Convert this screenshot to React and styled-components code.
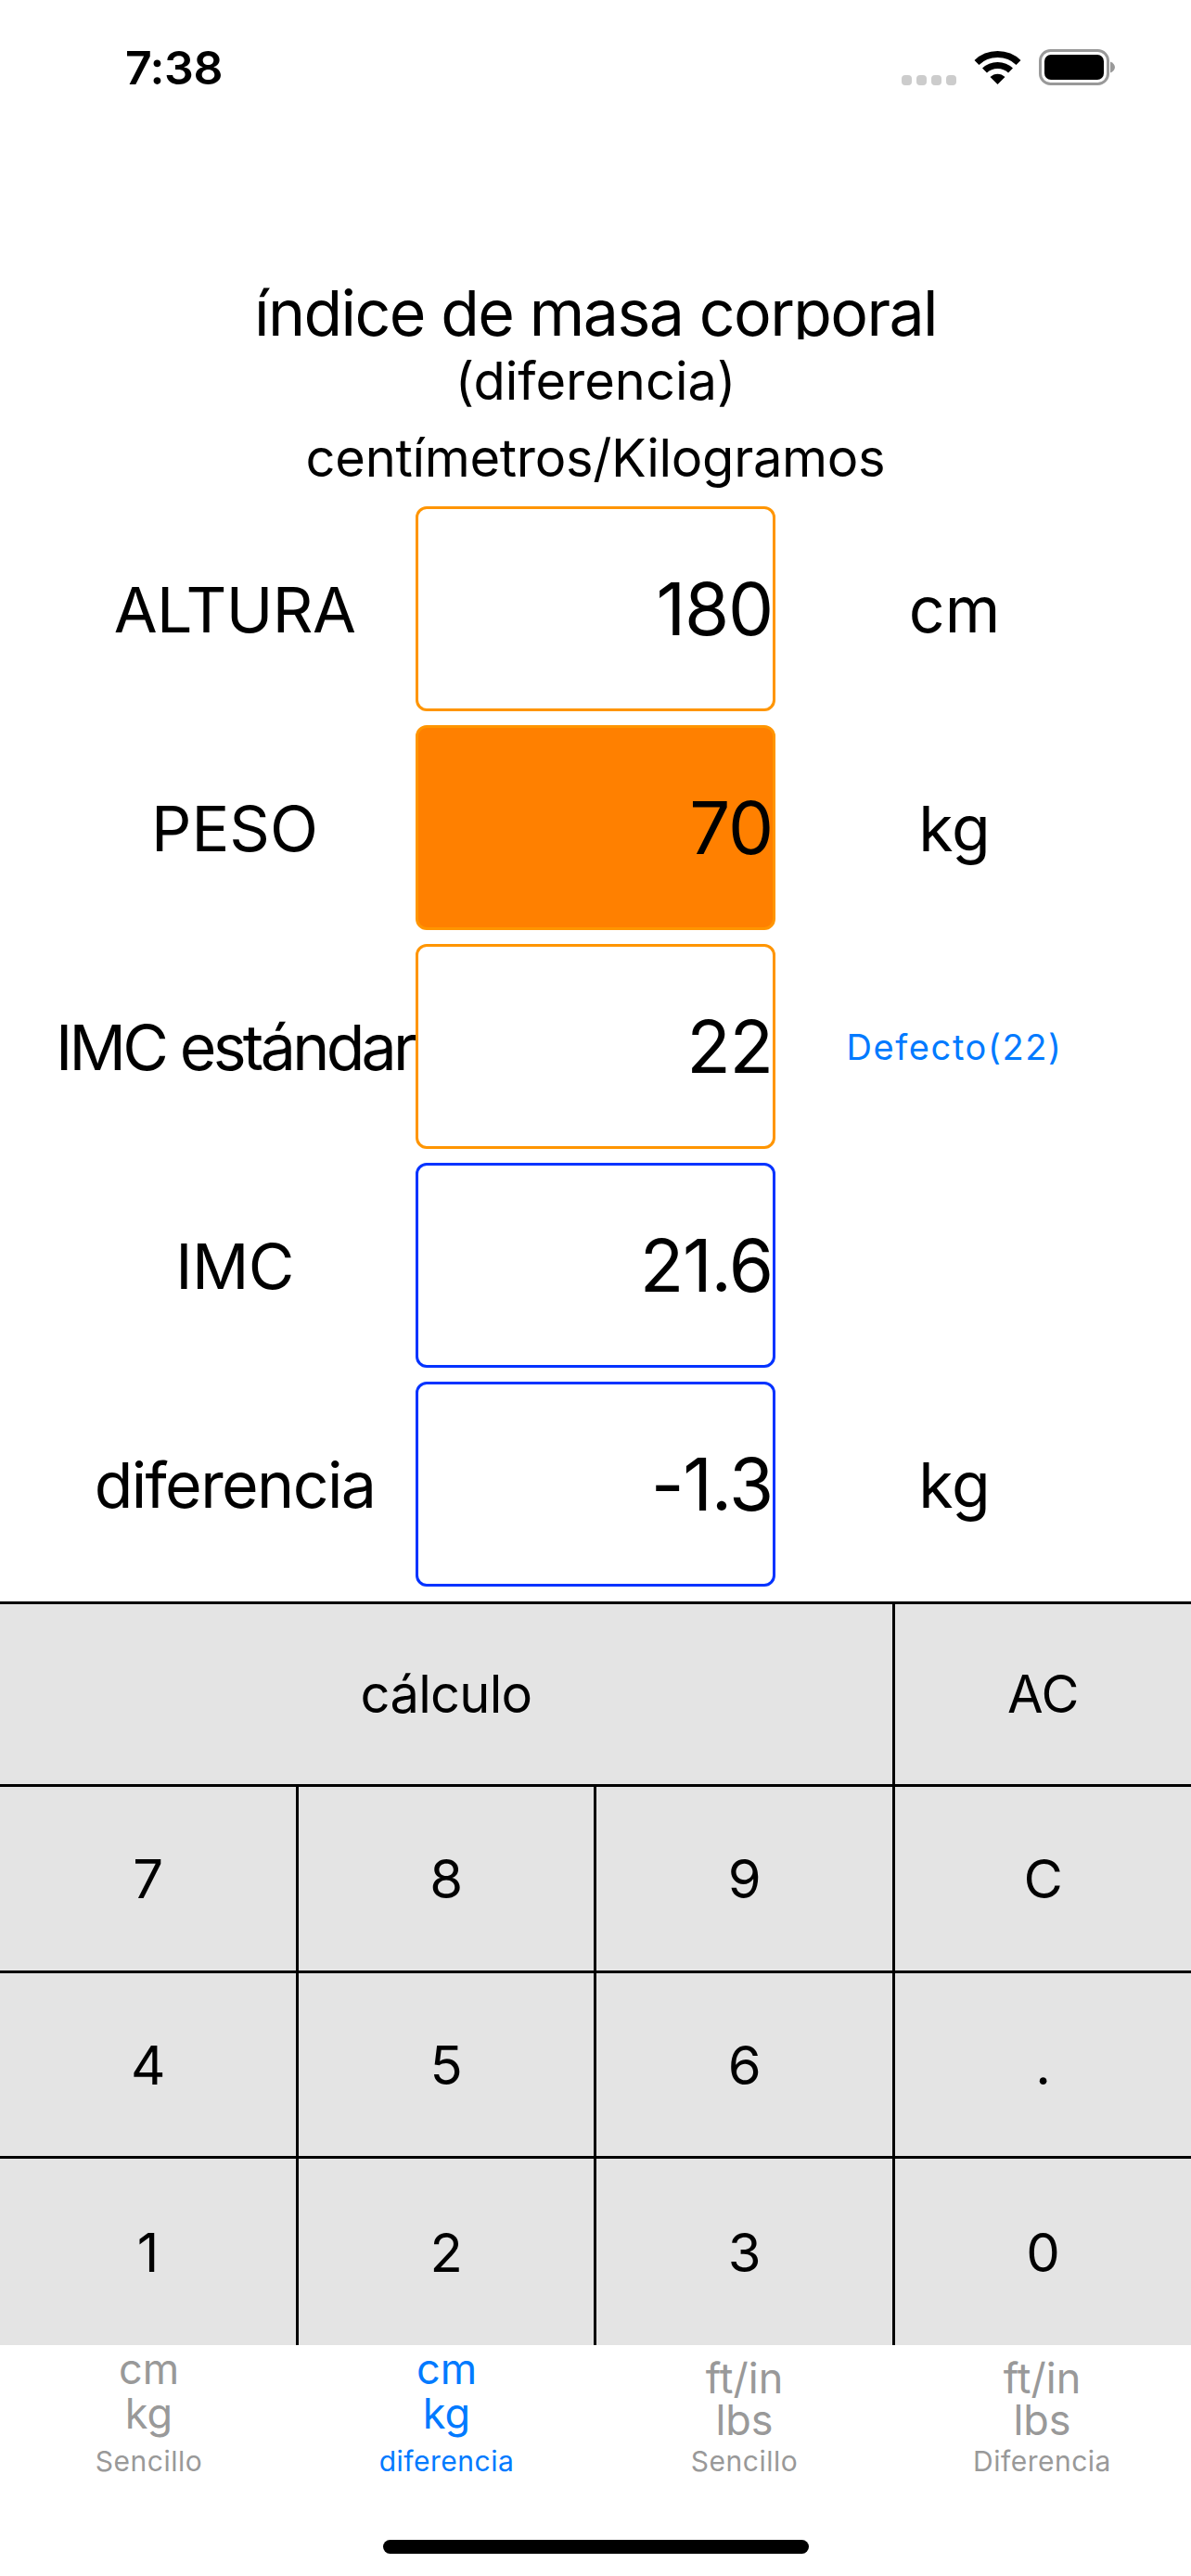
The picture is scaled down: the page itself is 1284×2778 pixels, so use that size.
import React from 'react';
import styled, { createGlobalStyle } from 'styled-components';

const GlobalStyle = createGlobalStyle`
  html, body {
    margin: 0;
    padding: 0;
    background: #fff;
  }
  * {
    box-sizing: border-box;
  }
`;

const Screen = styled.div`
  width: 1284px;
  height: 2778px;
  display: flex;
  flex-direction: column;
  background: #fff;
  color: #000;
  font-family: Inter, 'Liberation Sans', sans-serif;
  overflow: hidden;
`;

const StatusBar = styled.div`
  height: 306px;
  padding: 49px 82px 0 135px;
  display: flex;
  justify-content: space-between;
  align-items: flex-start;
`;

const Clock = styled.div`
  font-size: 50px;
  line-height: 48px;
  font-weight: 600;
  letter-spacing: -0.5px;
`;

const StatusIcons = styled.div`
  display: flex;
  align-items: flex-start;
  gap: 19px;
  padding-top: 4px;
`;

const SignalDots = styled.div`
  display: flex;
  gap: 5px;
  padding-top: 28px;
`;

const SignalDot = styled.span`
  width: 11px;
  height: 11px;
  border-radius: 4px;
  background: #ccc;
`;

const Header = styled.div`
  height: 240px;
  text-align: center;
`;

// the first line is cut just under its baseline, as in the app
const TitleLine = styled.div`
  height: ${(p) => p.$box}px;
  overflow: hidden;
  font-size: ${(p) => p.$size}px;
  line-height: ${(p) => p.$height}px;
  letter-spacing: ${(p) => p.$spacing || 0}px;
`;

const Form = styled.div`
  display: flex;
  flex-direction: column;
  gap: 15px;
  padding-left: 58px;
  height: 1181px;
`;

const FormRow = styled.div`
  display: grid;
  grid-template-columns: 390px 388px 386px;
  height: 221px;
  align-items: center;
`;

const FieldLabel = styled.div`
  display: flex;
  justify-content: center;
  font-size: 68px;
  letter-spacing: ${(p) => p.$spacing}px;
  white-space: nowrap;
`;

const ValueBox = styled.div`
  height: 100%;
  display: flex;
  align-items: center;
  justify-content: flex-end;
  border: 3px solid ${(p) => (p.$kind === 'result' ? '#0433ff' : '#ff9500')};
  border-radius: 12px;
  background: ${(p) => (p.$active ? '#ff8000' : '#fff')};
  font-size: 78px;
  letter-spacing: -1.2px;
`;

const Unit = styled.div`
  text-align: center;
  font-size: ${(p) => (p.$link ? 38 : 68)}px;
  color: ${(p) => (p.$link ? '#007aff' : '#000')};
  letter-spacing: ${(p) => (p.$link ? 1.6 : 0)}px;
`;

const Keypad = styled.div`
  display: grid;
  grid-template-columns: 322px 321px 322px 319px;
  grid-template-rows: 197px 201px 200px 204px;
  height: 802px;
`;

const Key = styled.div`
  grid-column: span ${(p) => p.$span || 1};
  display: flex;
  align-items: center;
  justify-content: center;
  background: #e4e4e4;
  border-top: 3px solid #000;
  border-right: ${(p) => (p.$last ? 'none' : '3px solid #000')};
  font-size: ${(p) => p.$size || 58}px;
  letter-spacing: ${(p) => p.$spacing || -0.3}px;
`;

const TabBar = styled.div`
  flex: 1;
  display: flex;
  flex-direction: column;
`;

const Tabs = styled.div`
  display: grid;
  grid-template-columns: repeat(4, 321px);
  height: 210px;
`;

const Tab = styled.div`
  display: flex;
  flex-direction: column;
  align-items: center;
  color: ${(p) => (p.$active ? '#007aff' : '#999')};
`;

const TabGlyph = styled.div`
  height: 96px;
  margin-top: ${(p) => p.$top}px;
  font-size: 45px;
  line-height: ${(p) => p.$line}px;
  text-align: center;
  white-space: pre-line;
`;

const TabCaption = styled.div`
  margin-top: ${(p) => p.$top}px;
  font-size: 30px;
  line-height: 36px;
  letter-spacing: 0.5px;
`;

const HomeIndicator = styled.div`
  width: 459px;
  height: 15px;
  margin: 0 auto;
  border-radius: 8px;
  background: #000;
`;

function WifiIcon() {
  return (
    <svg width="51" height="38" viewBox="0 0 51 38">
      <path d="M3 14.5C15 2.5 36 2.5 48 14.5" fill="none" stroke="#000" strokeWidth="7" />
      <path d="M11.5 23C19 15.5 32 15.5 39.5 23" fill="none" stroke="#000" strokeWidth="7" />
      <path d="M17.5 30C22 25.5 29 25.5 33.5 30L25.5 38Z" fill="#000" />
    </svg>
  );
}

function BatteryIcon() {
  return (
    <svg width="82" height="39" viewBox="0 0 82 39">
      <rect x="1.5" y="1.5" width="73" height="36" rx="11" fill="none" stroke="#999" strokeWidth="3" />
      <rect x="6" y="6" width="64" height="27" rx="7" fill="#000" />
      <path d="M77 13.5C80 14.5 82 17 82 19.5C82 22 80 24.5 77 25.5Z" fill="#999" />
    </svg>
  );
}

const rows = [
  { label: 'ALTURA', spacing: -0.6, value: '180', unit: 'cm' },
  { label: 'PESO', spacing: 0, value: '70', unit: 'kg', active: true },
  { label: 'IMC estándar', spacing: -3.7, value: '22', unit: 'Defecto(22)', link: true },
  { label: 'IMC', spacing: -0.6, value: '21.6', kind: 'result' },
  { label: 'diferencia', spacing: -1.6, value: '-1.3', unit: 'kg', kind: 'result' },
];

const keys = [
  ['7', '8', '9', 'C'],
  ['4', '5', '6', '.'],
  ['1', '2', '3', '0'],
];

const tabs = [
  { glyph: 'cm\nkg', caption: 'Sencillo' },
  { glyph: 'cm\nkg', caption: 'diferencia', active: true },
  { glyph: 'ft/in\nlbs', caption: 'Sencillo', imperial: true },
  { glyph: 'ft/in\nlbs', caption: 'Diferencia', imperial: true },
];

export default function App() {
  return (
    <Screen>
      <GlobalStyle />
      <StatusBar>
        <Clock>7:38</Clock>
        <StatusIcons>
          <SignalDots>
            <SignalDot />
            <SignalDot />
            <SignalDot />
            <SignalDot />
          </SignalDots>
          <WifiIcon />
          <BatteryIcon />
        </StatusIcons>
      </StatusBar>
      <Header>
        <TitleLine $box={60} $size={68} $height={62} $spacing={-1.6}>índice de masa corporal</TitleLine>
        <TitleLine $box={90} $size={56} $height={90}>(diferencia)</TitleLine>
        <TitleLine $box={77} $size={56} $height={77} $spacing={-0.3}>centímetros/Kilogramos</TitleLine>
      </Header>
      <Form>
        {rows.map((row) => (
          <FormRow key={row.label}>
            <FieldLabel $spacing={row.spacing}>{row.label}</FieldLabel>
            <ValueBox $kind={row.kind} $active={row.active}>{row.value}</ValueBox>
            <Unit $link={row.link}>{row.unit}</Unit>
          </FormRow>
        ))}
      </Form>
      <Keypad>
        <Key $span={3} $size={56} $spacing={-0.7}>cálculo</Key>
        <Key $last $size={56}>AC</Key>
        {keys.flat().map((key, i) => (
          <Key key={key} $last={i % 4 === 3}>{key}</Key>
        ))}
      </Keypad>
      <TabBar>
        <Tabs>
          {tabs.map((tab) => (
            <Tab key={tab.caption + tab.glyph} $active={tab.active}>
              <TabGlyph $top={tab.imperial ? 13 : 2} $line={tab.imperial ? 45 : 48}>{tab.glyph}</TabGlyph>
              <TabCaption $top={tab.imperial ? -2 : 9}>{tab.caption}</TabCaption>
            </Tab>
          ))}
        </Tabs>
        <HomeIndicator />
      </TabBar>
    </Screen>
  );
}
